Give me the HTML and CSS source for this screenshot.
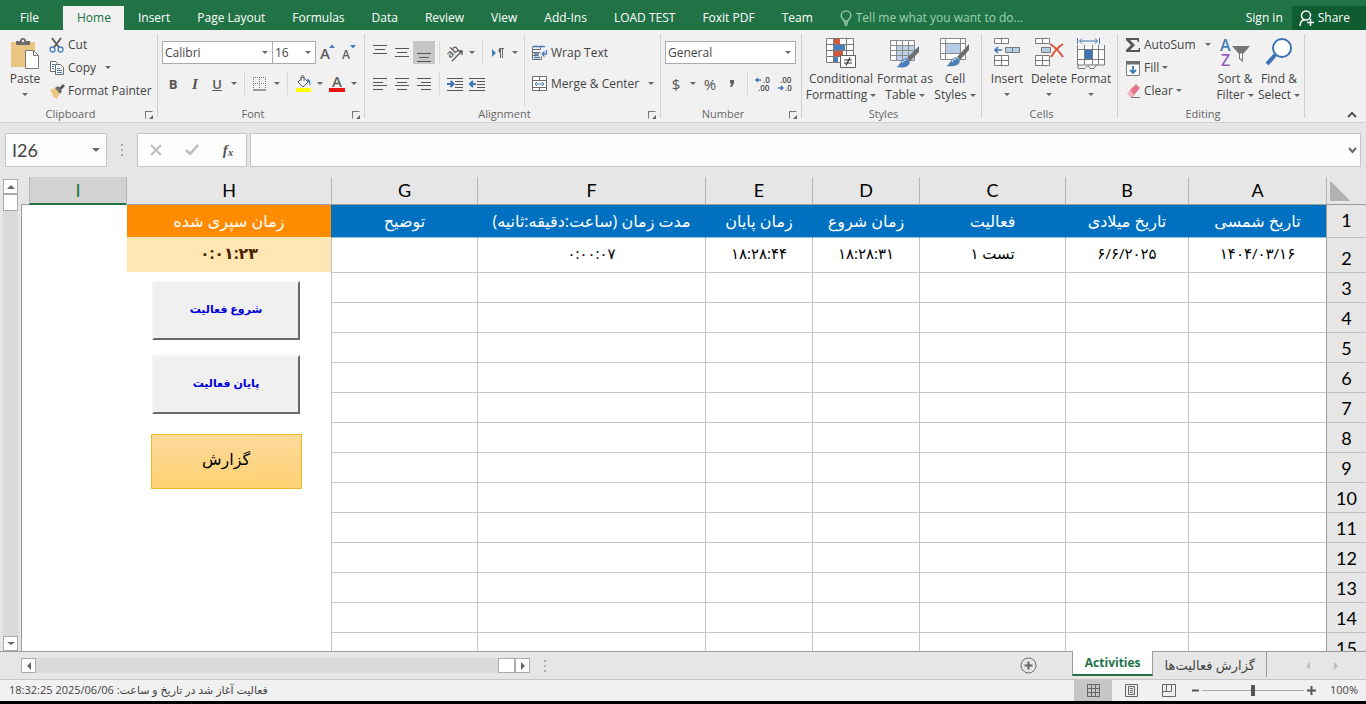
FILE: index.html
```html
<!DOCTYPE html>
<html lang="fa">
<head>
    <meta charset="UTF-8">
    <meta name="viewport" content="width=device-width, initial-scale=1.0">
    <title>Activities</title>
    <link rel="stylesheet" href="styles.css">
</head>
<body>
    <nav class="tabs">
        <button class="tab file">File</button>
        <button class="tab active">Home</button>
        <button class="tab">Insert</button>
        <button class="tab">Page Layout</button>
        <button class="tab">Formulas</button>
        <button class="tab">Data</button>
        <button class="tab">Review</button>
        <button class="tab">View</button>
        <button class="tab">Add-Ins</button>
        <button class="tab">LOAD TEST</button>
        <button class="tab">Foxit PDF</button>
        <button class="tab">Team</button>
        <label class="tell-me">
            <svg width="12" height="16" viewBox="0 0 12 16" fill="none" stroke="#9fd0b3" stroke-width="1.3"><path d="M4 11c0-2-2.800-2.500-2.800-5.600a4.800 4.600 0 0 1 9.600 0C10.800 8.500 8 9 8 11zM4 13h4M4.500 15h3"/></svg>
            <input type="text" placeholder="Tell me what you want to do..." aria-label="Tell me what you want to do">
        </label>
        <button class="tab sign-in">Sign in</button>
        <button class="tab share">
            <svg width="15" height="17" viewBox="0 0 15 17" fill="none" stroke="#fff" stroke-width="1.5"><circle cx="7" cy="5.500" r="4.500"/><path d="M1 16c0-4 2-6 5-6.500M8 12.500h7M11.500 9v7"/></svg>
            Share
        </button>
    </nav>

    <div class="ribbon">
        <section class="group clipboard">
            <div class="group-body">
                <button class="big">
                    <svg width="30" height="31" viewBox="0 0 30 31"><path d="M1 4h24v25H1z" fill="#eac681"/><path d="M6 3h4a3 3 0 0 1 6 0h4v4H6z" fill="#6d6d6d"/><circle cx="13" cy="3" r="1.200" fill="#f1f1f1"/><path d="M15.500 12.500h8l5 5v13h-13z" fill="#fff" stroke="#7a7a7a"/><path d="M23.500 12.500v5h5" fill="none" stroke="#7a7a7a"/></svg>
                    <span>Paste</span><i class="caret"></i>
                </button>
                <div class="stack">
                    <button class="small">
                        <svg width="16" height="16" viewBox="0 0 16 16" fill="none"><path d="M3 1l7.500 10M12 1L4.500 11" stroke="#606060" stroke-width="2"/><circle cx="3.500" cy="12.500" r="2.500" stroke="#4a7ebb" stroke-width="1.300"/><circle cx="11.500" cy="12.500" r="2.500" stroke="#4a7ebb" stroke-width="1.300"/></svg>
                        Cut
                    </button>
                    <button class="small">
                        <svg width="16" height="16" viewBox="0 0 16 16"><g fill="#fff" stroke="#6d6d6d"><path d="M1.500 1.500h5l2 2v8h-7z"/><path d="M6.500 4.500h5l3 3v7h-8z"/></g><path d="M3 4.500h3M3 6.500h2M3 8.500h2M8 8.500h3M8 10.500h5M8 12.500h5" stroke="#4a7ebb"/></svg>
                        Copy <i class="caret far"></i>
                    </button>
                    <button class="small">
                        <svg width="16" height="16" viewBox="0 0 16 16"><path d="M1 7l5-2 5 5-3 6-3-2z" fill="#eac681"/><path d="M6 5l3-2 4 5-2 3z" fill="#6d6d6d"/><path d="M10 5l4-4 2 2-4 4z" fill="#555"/></svg>
                        Format Painter
                    </button>
                </div>
            </div>
            <div class="group-label">Clipboard<i class="launcher"></i></div>
        </section>

        <section class="group font">
            <div class="group-body rows">
                <div class="row">
                    <span class="drop font-name"><select aria-label="Font"><option>Calibri</option></select></span>
                    <span class="drop font-size"><select aria-label="Font size"><option>16</option></select></span>
                    <button class="tool" aria-label="Increase font size"><svg width="16" height="18" viewBox="0 0 16 18"><text x="1" y="15" font-size="15" class="glyph">A</text><path d="M10 4l3-3.500L16 4z" fill="#4a7ebb"/></svg></button>
                    <button class="tool" aria-label="Decrease font size"><svg width="16" height="18" viewBox="0 0 16 18"><text x="1" y="15" font-size="12" class="glyph">A</text><path d="M9 1h6l-3 3.500z" fill="#4a7ebb"/></svg></button>
                </div>
                <div class="row">
                    <button class="tool bold">B</button>
                    <button class="tool italic">I</button>
                    <button class="tool underline">U</button>
                    <button class="arrow" aria-label="Underline options"><i class="caret"></i></button>
                    <i class="sep"></i>
                    <button class="tool" aria-label="Borders"><svg width="14" height="14" viewBox="0 0 14 14" stroke="#777" fill="none"><path d="M.5 0v12M6.500 0v12M12.500 0v12M0 .5h13M0 6.500h13" stroke-dasharray="1 1"/><path d="M0 13h13" stroke="#444"/></svg></button>
                    <button class="arrow" aria-label="Border options"><i class="caret"></i></button>
                    <i class="sep"></i>
                    <button class="tool" aria-label="Fill colour"><svg width="17" height="17" viewBox="0 0 17 17"><path d="M3 7l5-5 5 5-5 5z" fill="#fff" stroke="#606060"/><path d="M6 6V2a1.500 1.500 0 0 1 3 0v4" fill="none" stroke="#606060"/><path d="M12 4c3 0 4 3 3 7-1-3-1-4-3-5z" fill="#4a7ebb"/><path d="M1 13h15v4H1z" fill="#ff0"/></svg></button>
                    <button class="arrow" aria-label="Fill colours"><i class="caret"></i></button>
                    <button class="tool" aria-label="Font colour"><svg width="17" height="17" viewBox="0 0 17 17"><text x="3" y="12" font-size="15" class="glyph">A</text><path d="M0 13h16v4H0z" fill="#e11"/></svg></button>
                    <button class="arrow" aria-label="Font colours"><i class="caret"></i></button>
                </div>
            </div>
            <div class="group-label">Font<i class="launcher"></i></div>
        </section>

        <section class="group align">
            <div class="group-body">
                <div class="rows">
                    <div class="row">
                        <button class="tool" aria-label="Top align"><svg width="14" height="22" viewBox="0 0 14 22" stroke="#555"><path d="M0 3.500h14M2 7.500h10M0 11.500h14"/></svg></button>
                        <button class="tool" aria-label="Middle align"><svg width="14" height="22" viewBox="0 0 14 22" stroke="#555"><path d="M0 6.500h14M2 10.500h10M0 14.500h14"/></svg></button>
                        <button class="tool pressed" aria-label="Bottom align"><svg width="14" height="22" viewBox="0 0 14 22" stroke="#555"><path d="M0 11.500h14M2 15.500h10M0 19.500h14"/></svg></button>
                        <i class="sep"></i>
                        <button class="tool" aria-label="Orientation"><svg width="18" height="18" viewBox="0 0 18 18"><text x="1" y="11" font-size="11" class="glyph" transform="rotate(-45 7 9)">ab</text><path d="M6 17L16 7M12 7h4v4" fill="none" stroke="#555" stroke-width="1.300"/></svg></button>
                        <button class="arrow" aria-label="Orientation options"><i class="caret"></i></button>
                        <i class="sep"></i>
                        <button class="tool" aria-label="Text direction"><svg width="14" height="12" viewBox="0 0 14 12"><path d="M1 2l4 4-4 4z" fill="#4a7ebb"/><path d="M10 1a2.500 2.500 0 0 0 0 5z" fill="#666"/><path d="M8.500 1.500H13M9.500 1v10M11.500 1v10" stroke="#666"/></svg></button>
                        <button class="arrow" aria-label="Text direction options"><i class="caret"></i></button>
                    </div>
                    <div class="row">
                        <button class="tool" aria-label="Align left"><svg width="14" height="12" viewBox="0 0 14 12" stroke="#555"><path d="M0 .5h14M0 4.500h10M0 7.500h14M0 11.500h10"/></svg></button>
                        <button class="tool" aria-label="Center"><svg width="14" height="12" viewBox="0 0 14 12" stroke="#555"><path d="M0 .5h14M2 4.500h10M0 7.500h14M2 11.500h10"/></svg></button>
                        <button class="tool" aria-label="Align right"><svg width="14" height="12" viewBox="0 0 14 12" stroke="#555"><path d="M0 .5h14M4 4.500h10M0 7.500h14M4 11.500h10"/></svg></button>
                        <i class="sep"></i>
                        <button class="tool" aria-label="Decrease indent"><svg width="16" height="14" viewBox="0 0 16 14"><path d="M0 1.500h16M8 4.500h8M8 7.500h8M8 10.500h8M0 13.500h16" stroke="#555"/><path d="M0 7h6M3.500 4l3 3-3 3" fill="none" stroke="#3b73b4" stroke-width="2"/></svg></button>
                        <button class="tool" aria-label="Increase indent"><svg width="16" height="14" viewBox="0 0 16 14"><path d="M0 1.500h16M8 4.500h8M8 7.500h8M8 10.500h8M0 13.500h16" stroke="#555"/><path d="M1 7h6M4 4L1 7l3 3" fill="none" stroke="#3b73b4" stroke-width="2"/></svg></button>
                    </div>
                </div>
                <div class="rows wrap-merge">
                    <button class="small">
                        <svg width="16" height="16" viewBox="0 0 16 16" fill="none"><path d="M.5 1.500v13M.5 4.500h8M.5 7.500h8M.5 10.500h6M.5 14.500h9v-3M8.500 1.500v3" stroke="#6d6d6d"/><path d="M1 1.500h12M2 9h5M2 12.500h6M14.500 5v4h-4M12.500 6.500L10 9l2.500 2.500" stroke="#4a7ebb" stroke-width="1.300"/></svg>
                        Wrap Text
                    </button>
                    <button class="small">
                        <svg width="16" height="16" viewBox="0 0 16 16" fill="#fff" stroke="#6d6d6d"><path d="M.5 .5h14v14H.5zM.5 4.500h14M.5 11.500h14M7.500 .5v4M7.500 11.500v4"/><path d="M3 8h9M5 6L3 8l2 2M10 6l2 2-2 2" stroke="#4a7ebb" fill="none"/></svg>
                        Merge &amp; Center <i class="caret far"></i>
                    </button>
                </div>
            </div>
            <div class="group-label">Alignment<i class="launcher"></i></div>
        </section>

        <section class="group number">
            <div class="group-body rows">
                <div class="row"><span class="drop format"><select aria-label="Number format"><option>General</option></select></span></div>
                <div class="row">
                    <button class="tool sign">$</button>
                    <button class="arrow" aria-label="Currency options"><i class="caret"></i></button>
                    <button class="tool sign">%</button>
                    <button class="tool comma" aria-label="Comma style"><svg width="6" height="9" viewBox="0 0 6 9"><path d="M1 1h4v3L3 8H1l1.500-3.500H1z" fill="#606060"/></svg></button>
                    <i class="sep"></i>
                    <button class="tool" aria-label="Increase decimal"><svg width="16" height="16" viewBox="0 0 16 16"><text x="8" y="7" class="digits">.0</text><text x="3" y="15" class="digits">.00</text><path d="M6 4H1M3 2L1 4l2 2" fill="none" stroke="#3b73b4" stroke-width="1.300"/></svg></button>
                    <button class="tool" aria-label="Decrease decimal"><svg width="16" height="16" viewBox="0 0 16 16"><text x="3" y="7" class="digits">.00</text><text x="8" y="15" class="digits">.0</text><path d="M1 12h5M4 10l2 2-2 2" fill="none" stroke="#3b73b4" stroke-width="1.300"/></svg></button>
                </div>
            </div>
            <div class="group-label">Number<i class="launcher"></i></div>
        </section>

        <section class="group styles">
            <div class="group-body">
                <button class="big conditional">
                    <svg width="30" height="31" viewBox="0 0 30 31"><path d="M.5 .5h27v24H.5z" fill="#fff"/><path d="M8 1h6v6H8zM8 13h9v6H8z" fill="#d2573b"/><path d="M8 7h11v6H8zM8 19h4v5H8z" fill="#4a7ebb"/><path d="M.5 .5h27v24H.5zM.5 6.500h27M.5 12.500h27M.5 18.500h27M7.500 .5v24M20.500 .5v24" fill="none" stroke="#7a7a7a"/><path d="M14.500 17.500h15v12h-15z" fill="#fff" stroke="#606060"/><path d="M18 22h8M18 25h8M24 19.500l-4 8" stroke="#333" stroke-width="1.200"/></svg>
                    <span>Conditional</span><span>Formatting<i class="caret"></i></span>
                </button>
                <button class="big table-format">
                    <svg width="30" height="31" viewBox="0 0 30 31"><path d="M.5 2.500h24v20H.5z" fill="#fff"/><path d="M7 8h17v14H7z" fill="#bccfe6"/><path d="M.5 2.500h24v20H.5zM.5 7.500h24M.5 12.500h24M.5 17.500h24M6.500 2.500v20M12.500 2.500v20M18.500 2.500v20" fill="none" stroke="#8a8a8a"/><path d="M29 8v6l-9 9-3-3z" fill="#6d6d6d"/><path d="M16 20l4 4c-1 6-8 6-14 5 4-1 4-7 10-9z" fill="#4a7ebb"/><path d="M12 25c1-2 2-3 4-3" stroke="#fff" fill="none"/></svg>
                    <span>Format as</span><span>Table<i class="caret"></i></span>
                </button>
                <button class="big cell-styles">
                    <svg width="30" height="31" viewBox="0 0 30 31"><path d="M.5 .5h25v21H.5z" fill="#fff"/><path d="M6 6h14v10H6z" fill="#b5cde5"/><path d="M.5 .5h25v21H.5zM.5 5.500h25M.5 15.500h25M5.500 .5v21M20.500 .5v21" fill="none" stroke="#8a8a8a"/><path d="M29 6v6l-9 10-3-3z" fill="#6d6d6d"/><path d="M16 19l4 4c-1 5-8 6-14 5 4-1 4-7 10-9z" fill="#4a7ebb"/><path d="M12 24c1-2 2-3 4-3" stroke="#fff" fill="none"/></svg>
                    <span>Cell</span><span>Styles<i class="caret"></i></span>
                </button>
            </div>
            <div class="group-label">Styles</div>
        </section>

        <section class="group cells">
            <div class="group-body">
                <button class="big">
                    <svg width="28" height="31" viewBox="0 0 28 31" stroke="#7a7a7a" fill="#fff"><path d="M1.500 .5h14v5h-14zM8.500 .5v5M1.500 17.500h14v10h-14zM8.500 17.500v10M1.500 22.500h14"/><path d="M12.500 9.500h14v5h-14zM19.500 9.500v5" fill="#b5cde5"/><path d="M9 12H2M5 9l-3 3 3 3" stroke="#3b73b4" stroke-width="1.600" fill="none"/></svg>
                    <span>Insert</span><i class="caret"></i>
                </button>
                <button class="big">
                    <svg width="30" height="31" viewBox="0 0 30 31" stroke="#7a7a7a" fill="#fff"><path d="M1.500 .5h14v5h-14zM8.500 .5v5M1.500 17.500h14v10h-14zM8.500 17.500v10M1.500 22.500h14"/><path d="M7.500 9.500h9v5h-9z" fill="#b5cde5"/><path d="M16 6c5 3 9 7 13 13M29 6c-5 3-9 8-12 13" stroke="#e0533a" stroke-width="2" fill="none"/></svg>
                    <span>Delete</span><i class="caret"></i>
                </button>
                <button class="big">
                    <svg width="30" height="31" viewBox="0 0 30 31" fill="none"><path d="M1.500 0v6M23.500 0v6M4 3h17M6 .5L3.500 3 6 5.500M19 .5L21.500 3 19 5.500" stroke="#3b73b4"/><path d="M1.500 8.500h27v18h-27z" fill="#fff"/><path d="M9 12h7v9H9z" fill="#3b73b4"/><path d="M1.500 7v20h27V7M1.500 11.500h27M1.500 21.500h27M8.500 7v20M16.500 7v20M22.500 7v20M2 26.500v4h7l3-3 2 3h4l3-4" stroke="#7a7a7a"/></svg>
                    <span>Format</span><i class="caret"></i>
                </button>
            </div>
            <div class="group-label">Cells</div>
        </section>

        <section class="group editing">
            <div class="group-body">
                <div class="stack">
                    <button class="small">
                        <svg width="16" height="16" viewBox="0 0 16 16"><path d="M1 1h13v4h-1l-1-2H5l5 5-5 5h8l1-2h1v4H1v-2l5-5-5-5z" fill="#555"/></svg>
                        AutoSum <i class="caret far"></i>
                    </button>
                    <button class="small">
                        <svg width="16" height="16" viewBox="0 0 16 16"><path d="M1.500 1.500h13v14h-13z" fill="#fff" stroke="#7a7a7a"/><path d="M1 1h14v3.500H1z" fill="#6d6d6d"/><path d="M8 6v7M5 10l3 3 3-3" fill="none" stroke="#3b73b4" stroke-width="1.800"/></svg>
                        Fill<i class="caret"></i>
                    </button>
                    <button class="small">
                        <svg width="16" height="16" viewBox="0 0 16 16"><path d="M2 10l3-3 5 5-2 2H5z" fill="#f3b3c0"/><path d="M5 7l6-6 4 4-6 7z" fill="#e4748b"/><path d="M6 14.500h9" stroke="#777"/></svg>
                        Clear<i class="caret"></i>
                    </button>
                </div>
                <button class="big sort">
                    <svg width="30" height="31" viewBox="0 0 30 31"><text x="0" y="13" class="az a">A</text><text x="1" y="28" class="az z">Z</text><path d="M12 8h18l-7 8v8l-4-3v-5z" fill="#777"/><path d="M20 16l2-1v7l-2-2z" fill="#fff"/></svg>
                    <span>Sort &amp;</span><span>Filter<i class="caret"></i></span>
                </button>
                <button class="big find">
                    <svg width="30" height="31" viewBox="0 0 30 31"><circle cx="18" cy="10" r="9" fill="#fff" stroke="#3b73b4" stroke-width="2"/><path d="M12 16L3 26" stroke="#3b73b4" stroke-width="4"/></svg>
                    <span>Find &amp;</span><span>Select<i class="caret"></i></span>
                </button>
            </div>
            <div class="group-label">Editing</div>
        </section>
        <button class="collapse" aria-label="Collapse the ribbon"><svg width="10" height="7" viewBox="0 0 10 7"><path d="M1 6l4-4 4 4" fill="none" stroke="#555" stroke-width="2"/></svg></button>
    </div>

    <div class="formula-bar">
        <div class="name-box"><input type="text" value="I26" aria-label="Name box"><i class="caret"></i></div>
        <i class="grip"></i>
        <div class="formula-tools">
            <button aria-label="Cancel"><svg width="12" height="12" viewBox="0 0 12 12"><path d="M1 1l10 10M11 1L1 11" stroke="#bdbdbd" stroke-width="2"/></svg></button>
            <button aria-label="Enter"><svg width="14" height="12" viewBox="0 0 14 12"><path d="M1 6l4 4 8-9" fill="none" stroke="#bdbdbd" stroke-width="2.500"/></svg></button>
            <button class="fx" aria-label="Insert function">f<sub>x</sub></button>
        </div>
        <div class="formula-input">
            <input type="text" aria-label="Formula">
            <svg width="9" height="7" viewBox="0 0 9 7"><path d="M1 1l3.500 4L8 1" fill="none" stroke="#666" stroke-width="2"/></svg>
        </div>
    </div>

    <main class="workspace">
        <div class="v-scroll">
            <button aria-label="Scroll up"><i class="caret up"></i></button>
            <i class="thumb"></i>
            <i class="track"></i>
            <button aria-label="Scroll down"><i class="caret"></i></button>
        </div>
        <div class="sheet">
            <table class="grid" dir="rtl">
                <colgroup>
                    <col class="col-row"><col class="col-a"><col class="col-b"><col class="col-c"><col class="col-d"><col class="col-d"><col class="col-f"><col class="col-c"><col class="col-h"><col class="col-i"><col>
                </colgroup>
                <thead>
                    <tr>
                        <th class="corner"></th>
                        <th>A</th><th>B</th><th>C</th><th>D</th><th>E</th><th>F</th><th>G</th><th>H</th><th class="selected">I</th><th class="edge"></th>
                    </tr>
                </thead>
                <tbody>
                    <tr class="titles">
                        <th>1</th>
                        <td>تاریخ شمسی</td><td>تاریخ میلادی</td><td>فعالیت</td><td>زمان شروع</td><td>زمان پایان</td><td>مدت زمان (ساعت:دقیقه:ثانیه)</td><td>توضیح</td><td class="elapsed-title">زمان سپری شده</td>
                        <td class="blank" colspan="2" rowspan="15"></td>
                    </tr>
                    <tr class="record">
                        <th>2</th>
                        <td>۱۴۰۴/۰۳/۱۶</td><td>۶/۶/۲۰۲۵</td><td>تست ۱</td><td>۱۸:۲۸:۳۱</td><td>۱۸:۲۸:۴۴</td><td>۰:۰۰:۰۷</td><td></td><td class="elapsed">۰:۰۱:۲۳</td>
                    </tr>
                    <tr>
                        <th>3</th><td></td><td></td><td></td><td></td><td></td><td></td><td></td>
                        <td class="blank" rowspan="13">
                            <div class="actions">
                                <button class="action">شروع فعالیت</button>
                                <button class="action">پایان فعالیت</button>
                                <button class="report">گزارش</button>
                            </div>
                        </td>
                    </tr>
                    <tr><th>4</th><td></td><td></td><td></td><td></td><td></td><td></td><td></td></tr>
                    <tr><th>5</th><td></td><td></td><td></td><td></td><td></td><td></td><td></td></tr>
                    <tr><th>6</th><td></td><td></td><td></td><td></td><td></td><td></td><td></td></tr>
                    <tr><th>7</th><td></td><td></td><td></td><td></td><td></td><td></td><td></td></tr>
                    <tr><th>8</th><td></td><td></td><td></td><td></td><td></td><td></td><td></td></tr>
                    <tr><th>9</th><td></td><td></td><td></td><td></td><td></td><td></td><td></td></tr>
                    <tr><th>10</th><td></td><td></td><td></td><td></td><td></td><td></td><td></td></tr>
                    <tr><th>11</th><td></td><td></td><td></td><td></td><td></td><td></td><td></td></tr>
                    <tr><th>12</th><td></td><td></td><td></td><td></td><td></td><td></td><td></td></tr>
                    <tr><th>13</th><td></td><td></td><td></td><td></td><td></td><td></td><td></td></tr>
                    <tr><th>14</th><td></td><td></td><td></td><td></td><td></td><td></td><td></td></tr>
                    <tr><th>15</th><td></td><td></td><td></td><td></td><td></td><td></td><td></td></tr>
                </tbody>
            </table>
        </div>
    </main>

    <div class="sheet-bar">
        <div class="h-scroll">
            <button aria-label="Scroll left"><i class="caret left"></i></button>
            <i class="track"></i>
            <i class="thumb"></i>
            <button aria-label="Scroll right"><i class="caret right"></i></button>
        </div>
        <i class="grip"></i>
        <button class="add-sheet" aria-label="New sheet"><svg width="17" height="17" viewBox="0 0 17 17" fill="none" stroke="#666"><circle cx="8.500" cy="8.500" r="7.500"/><path d="M4.500 8.500h8M8.500 4.500v8" stroke-width="2"/></svg></button>
        <button class="sheet-tab active">Activities</button>
        <button class="sheet-tab" dir="rtl">گزارش فعالیت‌ها</button>
        <div class="sheet-nav">
            <button aria-label="Previous sheet"><i class="caret left"></i></button>
            <button aria-label="Next sheet"><i class="caret right"></i></button>
        </div>
    </div>

    <footer class="status">
        <span class="message" dir="rtl">فعالیت آغاز شد در تاریخ و ساعت: 2025/06/06 18:32:25</span>
        <div class="views">
            <button class="pressed" aria-label="Normal"><svg width="13" height="13" viewBox="0 0 13 13" fill="none" stroke="#666"><path d="M.5 .5h12v12H.5zM.5 4.500h12M.5 8.500h12M4.500 .5v12M8.500 .5v12"/></svg></button>
            <button aria-label="Page layout"><svg width="13" height="13" viewBox="0 0 13 13" fill="none" stroke="#666"><path d="M.5 .5h12v12H.5zM3.500 2.500h6v8h-6zM5 4.500h3M5 6.500h3M5 8.500h3"/></svg></button>
            <button aria-label="Page break preview"><svg width="14" height="13" viewBox="0 0 14 13" fill="none" stroke="#666"><path d="M.5 .5h13v12H.5zM4.500 .5v7h5v-7M.5 7.500h4"/></svg></button>
        </div>
        <button class="zoom-step" aria-label="Zoom out"><svg width="7" height="9" viewBox="0 0 7 9"><path d="M0 4.500h7" stroke="#555" stroke-width="2"/></svg></button>
        <input class="zoom" type="range" min="0" max="100" value="50" aria-label="Zoom">
        <button class="zoom-step" aria-label="Zoom in"><svg width="9" height="9" viewBox="0 0 9 9"><path d="M0 4.500h9M4.500 0v9" stroke="#555" stroke-width="2"/></svg></button>
        <span class="percent">100%</span>
    </footer>
    <div class="taskbar"></div>
</body>
</html>
```
FILE: styles.css
```css
* {
    box-sizing: border-box;
}

body {
    margin: 0;
    height: 100vh;
    display: flex;
    flex-direction: column;
    overflow: hidden;
    background-color: #e6e6e6;
    color: #444;
    font-family: "Open Sans", "DejaVu Sans", sans-serif;
    font-size: 12px;
    line-height: 16px;
}

button,
input,
select {
    margin: 0;
    padding: 0;
    border: none;
    background: none;
    color: inherit;
    font: inherit;
    outline: none;
}

button {
    display: flex;
    align-items: center;
    justify-content: center;
    white-space: nowrap;
}

svg {
    display: block;
    flex: none;
    overflow: visible;
}

.caret {
    display: inline-block;
    flex: none;
    border: 3px solid transparent;
    border-top-color: #666;
    border-bottom-width: 0;
    vertical-align: middle;
}
.caret.up {
    border-width: 0 4px 4px;
    border-bottom-color: #666;
}
.caret.left {
    border-width: 4px 4px 4px 0;
    border-color: transparent #666;
}
.caret.right {
    border-width: 4px 0 4px 4px;
    border-color: transparent #666;
}

/* top tabs */
.tabs {
    display: flex;
    height: 30px;
    padding-top: 6px;
    background-color: #217346;
    color: #fff;
}
.tab {
    padding: 0 13px 0 14px;
}
.tab.file {
    padding: 0 24px 0 20px;
}
.tab.active {
    background-color: #f1f1f1;
    color: #217346;
}
.tell-me {
    display: flex;
    flex: 1;
    align-items: center;
    gap: 4px;
    padding-left: 14px;
}
.tell-me input {
    flex: 1;
}
.tell-me input::placeholder {
    color: #9fd0b3;
    opacity: 1;
}
.tab.sign-in {
    padding: 0 9px;
}
.tab.share {
    gap: 4px;
    padding: 0 16px 0 7px;
    background-color: #0e5c2f;
}

/* ribbon */
.ribbon {
    display: flex;
    height: 93px;
    padding: 4px 0;
    background-color: #f1f1f1;
    border-bottom: 1px solid #d2d2d2;
}
.group {
    display: flex;
    flex: none;
    flex-direction: column;
    border-right: 1px solid #d0d0d0;
}
.group-body {
    display: flex;
    flex: none;
    height: 73px;
}
.group-label {
    position: relative;
    flex: none;
    text-align: center;
    padding-right: 16px;
    line-height: 14px;
    font-size: 11px;
    color: #666;
}
.launcher {
    position: absolute;
    right: 4px;
    top: 4px;
    width: 8px;
    height: 8px;
    border: 1px solid #777;
    border-right-color: transparent;
    border-bottom-color: transparent;
}
.launcher::after {
    content: "";
    position: absolute;
    right: -1px;
    bottom: -1px;
    border: 2px solid #666;
    border-top-color: transparent;
    border-left-color: transparent;
}
.clipboard { width: 158px; }
.font { width: 207px; }
.align { width: 296px; }
.number { width: 141px; }
.styles { width: 180px; }
.cells { width: 136px; }
.editing { width: 187px; }

.font .group-body,
.align .group-body,
.number .group-body,
.clipboard .group-body,
.cells .group-body { padding-left: 4px; }
.styles .group-body { padding-left: 2px; }
.editing .group-body { padding-left: 7px; }

.rows {
    display: flex;
    flex-direction: column;
    padding-top: 3px;
}
.row {
    display: flex;
    align-items: center;
    height: 31px;
}
.stack {
    display: flex;
    flex-direction: column;
}
.clipboard .stack {
    margin-left: 3px;
}
.small {
    justify-content: flex-start;
    gap: 3px;
    height: 23px;
}
.stack .small {
    padding-bottom: 2px;
}
.small .caret.far {
    margin-left: 6px;
}
.wrap-merge {
    margin-left: 3px;
    padding-left: 7px;
    border-left: 1px solid #d8d8d8;
}
.wrap-merge .small {
    height: 31px;
}
.big {
    flex-direction: column;
    justify-content: flex-start;
    width: 42px;
    padding-top: 4px;
}
.big svg {
    margin-bottom: 2px;
}
.big > .caret {
    margin-top: 6px;
}
.big span .caret {
    margin-left: 3px;
}
.conditional { width: 74px; }
.table-format { width: 54px; }
.cell-styles { width: 46px; }
.editing .stack { width: 88px; }
.sort,
.find { width: 44px; }

.tool {
    width: 22px;
    height: 23px;
    font-size: 13px;
    color: #555;
}
.tool.pressed {
    background-color: #c6c6c6;
}
.arrow {
    width: 12px;
    height: 23px;
}
.bold { font-weight: 700; }
.italic { font-family: "Liberation Serif", serif; font-size: 15px; font-style: italic; font-weight: 700; }
.underline { font-weight: 600; text-decoration: underline; }
.sign { font-size: 15px; }
.sep {
    width: 1px;
    height: 23px;
    margin: 0 4px;
    background-color: #d8d8d8;
}
.glyph {
    fill: #606060;
    font-weight: 600;
}
.digits {
    fill: #444;
    font-size: 8px;
    font-weight: 600;
}
.az {
    font-size: 16px;
    font-weight: 600;
}
.az.a { fill: #4a7ebb; }
.az.z { fill: #9461c0; }

.drop {
    position: relative;
    display: flex;
    height: 23px;
    background-color: #fff;
    border: 1px solid #ababab;
}
.drop select {
    flex: 1;
    appearance: none;
    padding: 0 2px;
}
.drop::after {
    content: "";
    position: absolute;
    right: 4px;
    top: 9px;
    border: 3px solid transparent;
    border-top-color: #666;
    border-bottom-width: 0;
    pointer-events: none;
}
.font-name { width: 111px; }
.font-size { width: 43px; border-left: none; }
.format { width: 131px; }
.collapse {
    align-self: flex-end;
    margin-left: auto;
    padding: 0 9px 0;
}

/* formula bar */
.formula-bar {
    display: flex;
    height: 54px;
    padding: 10px 5px 10px;
}
.name-box,
.formula-tools,
.formula-input {
    display: flex;
    align-items: center;
    height: 34px;
    background-color: #fdfdfd;
    border: 1px solid #c6c6c6;
}
.name-box {
    width: 102px;
    padding: 0 6px;
}
.name-box input {
    flex: 1;
    width: 0;
    font-family: Lato, sans-serif;
    font-size: 18px;
}
.name-box .caret {
    border-width: 4px 4px 0;
}
.grip {
    align-self: center;
    width: 2px;
    height: 12px;
    margin: 0 14px;
    background: repeating-linear-gradient(#aaa 0 2px, transparent 2px 5px);
}
.formula-tools {
    width: 110px;
    justify-content: space-around;
}
.formula-tools button {
    width: 36px;
    height: 32px;
}
.formula-tools .fx {
    font-family: "Liberation Serif", serif;
    font-size: 15px;
    font-style: italic;
    font-weight: 700;
    color: #555;
}
.fx sub {
    font-size: 11px;
    padding-top: 3px;
}
.formula-input {
    flex: 1;
    margin-left: 3px;
    padding-right: 3px;
}
.formula-input input {
    flex: 1;
}

/* worksheet */
.workspace {
    display: flex;
    flex: 1;
    min-height: 0;
}
.v-scroll {
    display: flex;
    flex-direction: column;
    width: 15px;
    margin: 2px 3px 0;
}
.v-scroll button,
.h-scroll button,
.thumb {
    flex: none;
    width: 15px;
    height: 15px;
    background-color: #fff;
    border: 1px solid #ababab;
}
.v-scroll .caret {
    border-left-width: 4px;
    border-right-width: 4px;
}
.v-scroll .thumb {
    height: 17px;
}
.track {
    flex: 1;
    background-color: #dadada;
}
.sheet {
    flex: 1;
    overflow: hidden;
}
.grid {
    width: 100%;
    table-layout: fixed;
    border-collapse: separate;
    border-spacing: 0;
    color: #000;
}
.col-row { width: 40px; }
.col-a { width: 138px; }
.col-b { width: 123px; }
.col-c { width: 146px; }
.col-d { width: 107px; }
.col-f { width: 228px; }
.col-h { width: 205px; }
.col-i { width: 97px; }

.grid th {
    padding: 0 0 2px;
    background-color: #e6e6e6;
    font-family: Lato, sans-serif;
    font-size: 18px;
    font-weight: 400;
    line-height: 23px;
    vertical-align: bottom;
}
.grid thead th {
    height: 28px;
    border-left: 1px solid #b5b5b5;
    border-bottom: 1px solid #9b9b9b;
}
.grid thead .selected {
    padding-bottom: 1px;
    background-color: #d2d2d2;
    border-bottom: 2px solid #217346;
    color: #217346;
}
.grid thead .edge {
    border-left: none;
}
.grid .corner {
    background: linear-gradient(to top right, #b2b2b2 50%, transparent 51%) 3px 4px / 20px 20px no-repeat;
}
.grid tbody th {
    border-left: 1px solid #9b9b9b;
    border-bottom: 1px solid #c0c0c0;
}
.grid .titles th {
    vertical-align: middle;
}
.grid td {
    height: 30px;
    padding: 0;
    background-color: #fff;
    border-left: 1px solid #c6c6c6;
    border-bottom: 1px solid #c6c6c6;
    text-align: center;
    vertical-align: middle;
    white-space: nowrap;
}
.grid .titles td {
    height: 33px;
    background-color: #0070c0;
    border-left-color: #0070c0;
    border-bottom-color: #9cc3e5;
    color: #fff;
    font-size: 16px;
}
.grid .titles .elapsed-title {
    background-color: #ff8c00;
    border-left-color: #fff;
    border-bottom-color: #ffe6b3;
}
.grid .record td {
    height: 35px;
    padding-bottom: 4px;
    font-size: 15px;
}
.grid .record .elapsed {
    background-color: #ffe6b3;
    border-left-color: #fff;
    border-bottom-color: #fff;
    color: #4a2500;
    font-size: 16px;
    font-weight: 700;
}
.grid .blank,
.grid .titles .blank {
    background-color: #fff;
    border-color: #fff;
    vertical-align: top;
}
.grid .titles .blank {
    border-left: 1px solid #9b9b9b;
}
.actions {
    display: flex;
    flex-direction: column;
    align-items: center;
    gap: 15px;
    padding: 8px 6px 0 0;
}
.action {
    width: 148px;
    height: 59px;
    padding-bottom: 4px;
    background-color: #f0f0f0;
    border: 2px solid #f4f4f4;
    border-right-color: #696969;
    border-bottom-color: #696969;
    color: #0000d8;
    font-size: 11px;
    font-weight: 700;
}
.report {
    width: 151px;
    height: 55px;
    margin-top: 5px;
    padding-bottom: 5px;
    background: linear-gradient(#fdd99b, #ffd272);
    border: 1px solid #ecb92e;
    color: #000;
    font-size: 16px;
}

/* sheet tabs */
.sheet-bar {
    display: flex;
    height: 28px;
    padding-left: 21px;
    border-top: 1px solid #9b9b9b;
}
.h-scroll {
    display: flex;
    align-items: center;
    width: 509px;
}
.h-scroll .track {
    height: 15px;
}
.h-scroll .thumb {
    width: 17px;
}
.add-sheet {
    margin-left: auto;
    padding: 0 35px;
}
.sheet-tab {
    height: 25px;
    padding: 0 11px 0 12px;
    border-right: 1px solid #9b9b9b;
    font-size: 13px;
}
.sheet-tab.active {
    margin-top: -1px;
    background-color: #fff;
    border-left: 1px solid #9b9b9b;
    border-bottom: 2px solid #217346;
    color: #217346;
    font-size: 12px;
    font-weight: 700;
}
.sheet-nav {
    display: flex;
    align-items: center;
    gap: 24px;
    padding: 0 28px 0 39px;
    opacity: 0.3;
}

/* status bar */
.status {
    display: flex;
    align-items: center;
    height: 22px;
    padding-left: 9px;
    background-color: #f1f1f1;
    border-top: 1px solid #c6c6c6;
}
.message {
    padding-bottom: 2px;
    font-size: 11px;
}
.views {
    display: flex;
    align-self: stretch;
    margin-left: auto;
}
.views button {
    width: 38px;
}
.views .pressed {
    background-color: #c6c6c6;
}
.zoom-step {
    width: 14px;
    height: 20px;
}
.zoom {
    width: 102px;
    height: 12px;
    appearance: none;
    background: linear-gradient(#aaa, #aaa) center / 100% 1px no-repeat;
}
.zoom::-webkit-slider-thumb {
    appearance: none;
    width: 4px;
    height: 11px;
    background-color: #555;
}
.percent {
    width: 48px;
    padding: 0 8px 2px 0;
    text-align: right;
    font-size: 11px;
}
.taskbar {
    height: 3px;
    background-color: #000;
}
```
